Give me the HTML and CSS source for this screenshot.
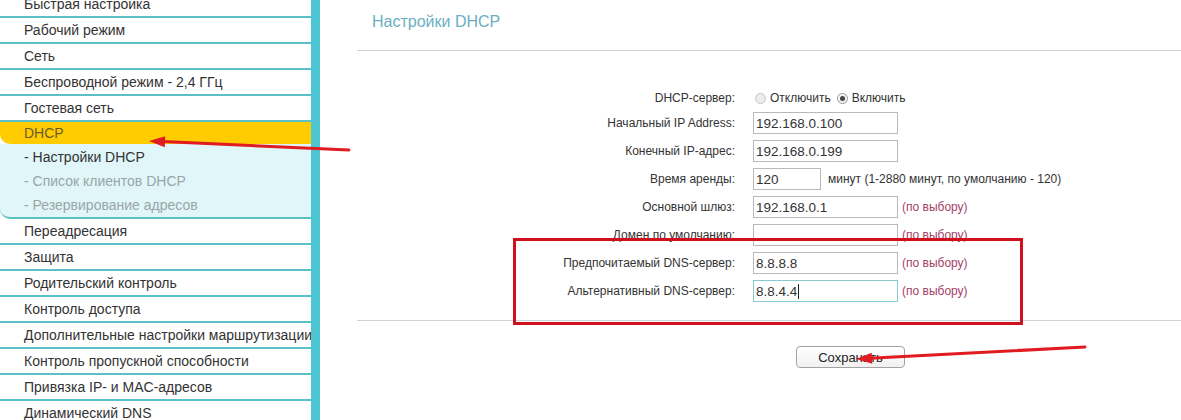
FILE: index.html
```html
<!DOCTYPE html>
<html lang="ru">
<head>
<meta charset="UTF-8">
<title>Настройки DHCP</title>
<link rel="stylesheet" href="styles.css">
</head>
<body>

<div class="page">
  <!-- left menu -->
  <nav class="sidebar">
    <ul class="menu">
      <li class="item">Быстрая настройка</li>
      <li class="item">Рабочий режим</li>
      <li class="item">Сеть</li>
      <li class="item">Беспроводной режим - 2,4 ГГц</li>
      <li class="item">Гостевая сеть</li>
      <li class="item active">DHCP</li>
      <li class="submenu">
        <div class="sub current">- Настройки DHCP</div>
        <div class="sub">- Список клиентов DHCP</div>
        <div class="sub">- Резервирование адресов</div>
      </li>
      <li class="item">Переадресация</li>
      <li class="item">Защита</li>
      <li class="item">Родительский контроль</li>
      <li class="item">Контроль доступа</li>
      <li class="item">Дополнительные настройки маршрутизации</li>
      <li class="item">Контроль пропускной способности</li>
      <li class="item">Привязка IP- и MAC-адресов</li>
      <li class="item">Динамический DNS</li>
    </ul>
  </nav>

  <main class="content">
    <div class="head">
      <h1 class="title">Настройки DHCP</h1>
    </div>

    <form class="form">
      <div class="row radio-row">
        <span class="lbl">DHCP-сервер:</span>
        <span class="radio"></span><span class="radio-text">Отключить</span>
        <span class="radio on"></span><span>Включить</span>
      </div>
      <div class="row">
        <span class="lbl">Начальный IP Address:</span>
        <input class="inp" type="text" value="192.168.0.100">
      </div>
      <div class="row">
        <span class="lbl">Конечный IP-адрес:</span>
        <input class="inp" type="text" value="192.168.0.199">
      </div>
      <div class="row">
        <span class="lbl">Время аренды:</span>
        <input class="inp short" type="text" value="120">
        <span class="note">минут (1-2880 минут, по умолчанию - 120)</span>
      </div>
      <div class="row">
        <span class="lbl">Основной шлюз:</span>
        <input class="inp" type="text" value="192.168.0.1">
        <span class="opt">(по выбору)</span>
      </div>
      <div class="row">
        <span class="lbl">Домен по умолчанию:</span>
        <input class="inp" type="text" value="">
        <span class="opt">(по выбору)</span>
      </div>
      <div class="row">
        <span class="lbl">Предпочитаемый DNS-сервер:</span>
        <input class="inp" type="text" value="8.8.8.8">
        <span class="opt">(по выбору)</span>
      </div>
      <div class="row">
        <span class="lbl">Альтернативный DNS-сервер:</span>
        <span class="inp focused">8.8.4.4<span class="caret"></span></span>
        <span class="opt">(по выбору)</span>
      </div>
    </form>

    <div class="actions">
      <button type="button" class="save">Сохранить</button>
    </div>
  </main>
</div>

<!-- annotations drawn over the screenshot -->
<div class="highlight"></div>
<svg class="arrows" width="1181" height="420" viewBox="0 0 1181 420">
  <line x1="349" y1="150" x2="163" y2="141.6" stroke="#e01b22" stroke-width="3" stroke-linecap="round"/>
  <polygon points="149,141 165.2,136.2 164.8,147.2" fill="#e01b22"/>
  <line x1="1085" y1="347" x2="870" y2="358.3" stroke="#e01b22" stroke-width="3" stroke-linecap="round"/>
  <polygon points="856,359 872.3,363.7 871.7,352.7" fill="#e01b22"/>
</svg>

</body>
</html>
```

FILE: styles.css
```css
body {
  margin: 0;
  height: 420px;
  overflow: hidden;
  position: relative;
  background: #fff;
  font-family: "Liberation Sans", Arial, sans-serif;
}

.page {
  display: flex;
  height: 420px;
}

/* left menu */
.sidebar {
  width: 311px;
  flex: none;
  background: #fff;
  border-right: 9px solid #4ec5d2;
  overflow: hidden;
}

.menu {
  list-style: none;
  margin: -8px 0 0;
  padding: 0;
}

.item {
  height: 24px;
  line-height: 25px;
  padding-left: 24px;
  border-bottom: 2px solid #5cc0c7;
  font-size: 14px;
  color: #333;
  white-space: nowrap;
  overflow: hidden;
}

.item.active {
  height: 22px;
  line-height: 23px;
  border-bottom: none;
  background: #ffcc00;
  color: #6b5a2e;
  border-bottom-left-radius: 10px;
}

.submenu {
  padding-top: 1px;
  background: #e0f6f8;
  border-bottom: 2px solid #5cc0c7;
  border-bottom-left-radius: 10px;
}

.sub {
  height: 24px;
  line-height: 25px;
  padding-left: 24px;
  font-size: 14px;
  color: #9aa5a8;
  white-space: nowrap;
}

.sub.current {
  color: #333;
}

/* right side */
.content {
  flex: 1;
  padding-left: 37px;
}

.head {
  height: 50px;
  border-bottom: 1px solid #cfcfcf;
}

.title {
  margin: 0;
  padding: 12px 0 0 15px;
  font-size: 16px;
  line-height: 20px;
  font-weight: normal;
  color: #6aafc0;
}

.form {
  margin: 36px 0 0;
  padding-bottom: 15px;
  border-bottom: 1px solid #d3d3d3;
}

.row {
  display: flex;
  align-items: center;
  height: 28px;
  font-size: 12px;
  color: #333;
}

.radio-row {
  height: 22px;
}

.lbl {
  width: 378px;
  flex: none;
  margin-right: 18px;
  text-align: right;
}

.radio {
  position: relative;
  width: 9px;
  height: 9px;
  margin: 0 4px 0 2px;
  border: 1px solid #c4c4c4;
  border-radius: 50%;
  background: #ececec;
}

.radio.on {
  border-color: #9a9a9a;
  background: #f4f4f4;
}

.radio.on::after {
  content: "";
  position: absolute;
  left: 2px;
  top: 2px;
  width: 5px;
  height: 5px;
  border-radius: 50%;
  background: #444;
}

.radio-text {
  margin-right: 4px;
}

.inp {
  box-sizing: border-box;
  width: 145px;
  height: 22px;
  margin: 0;
  padding: 0 2px;
  border: 1px solid #b9b9b9;
  border-radius: 0;
  font-family: "Liberation Sans", Arial, sans-serif;
  font-size: 13.5px;
  color: #333;
  background: #fff;
  outline: none;
}

.inp.short {
  width: 68px;
}

.inp.focused {
  display: flex;
  align-items: center;
  border-color: #88c9d2;
}

.caret {
  display: inline-block;
  width: 1px;
  height: 15px;
  margin-left: 1px;
  background: #222;
}

.note {
  margin-left: 7px;
}

.opt {
  margin-left: 4px;
  color: #a53e69;
}

.actions {
  padding-top: 25px;
}

.save {
  box-sizing: border-box;
  width: 109px;
  height: 22px;
  margin-left: 439px;
  padding: 0;
  border: 1px solid #a2a2a2;
  border-radius: 4px;
  background: linear-gradient(#ffffff, #f1f1f1);
  font-family: "Liberation Sans", Arial, sans-serif;
  font-size: 13px;
  color: #222;
}

/* red frame and arrows on top */
.highlight {
  position: absolute;
  left: 513px;
  top: 238px;
  width: 510px;
  height: 87px;
  box-sizing: border-box;
  border: 3px solid #d0101c;
}

.arrows {
  position: absolute;
  left: 0;
  top: 0;
  pointer-events: none;
}
```
